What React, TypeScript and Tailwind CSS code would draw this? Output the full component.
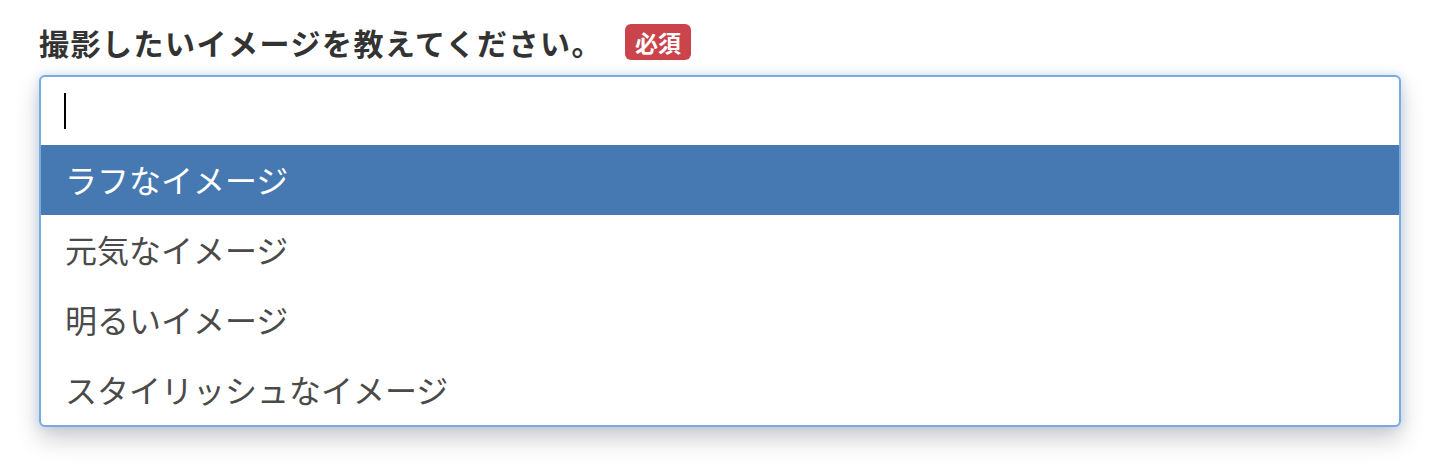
import React from "react";

const options = ["ラフなイメージ", "元気なイメージ", "明るいイメージ", "スタイリッシュなイメージ"];

export default function App() {
  const active = 0;

  return (
    <div
      className="min-h-screen bg-white pl-[39px] pr-[33px] pt-[24px]"
      style={{ fontFamily: '"Noto Sans CJK JP", "Noto Sans", sans-serif' }}
    >
      {/* Label */}
      <div className="flex items-center h-[36px]">
        <span className="text-[30px] font-bold text-[#333333] tracking-[1.5px] leading-none">
          撮影したいイメージを教えてください。
        </span>
        <span className="ml-[22px] h-[36px] w-[66px] flex items-center justify-center rounded-[6px] bg-[#c9444b] text-white text-[23px] font-bold leading-none">
          必須
        </span>
      </div>

      {/* Combobox */}
      <div className="mt-[15px] rounded-[6px] border-2 border-[#79aae3] bg-white shadow-[0_0_10px_rgba(120,170,230,0.35),0_12px_24px_rgba(0,0,0,0.2)] overflow-hidden">
        <div className="h-[68px] flex items-center pl-[23px]">
          <div className="w-[2px] h-[36px] bg-black" />
        </div>
        {options.map((o, i) => (
          <div
            key={o}
            className={`h-[70px] flex items-center pl-[24px] pb-[2px] text-[32px] leading-none ${
              i === active ? "bg-[#4679b1] text-white" : "text-[#4a4a4a]"
            }`}
          >
            {o}
          </div>
        ))}
      </div>
    </div>
  );
}
